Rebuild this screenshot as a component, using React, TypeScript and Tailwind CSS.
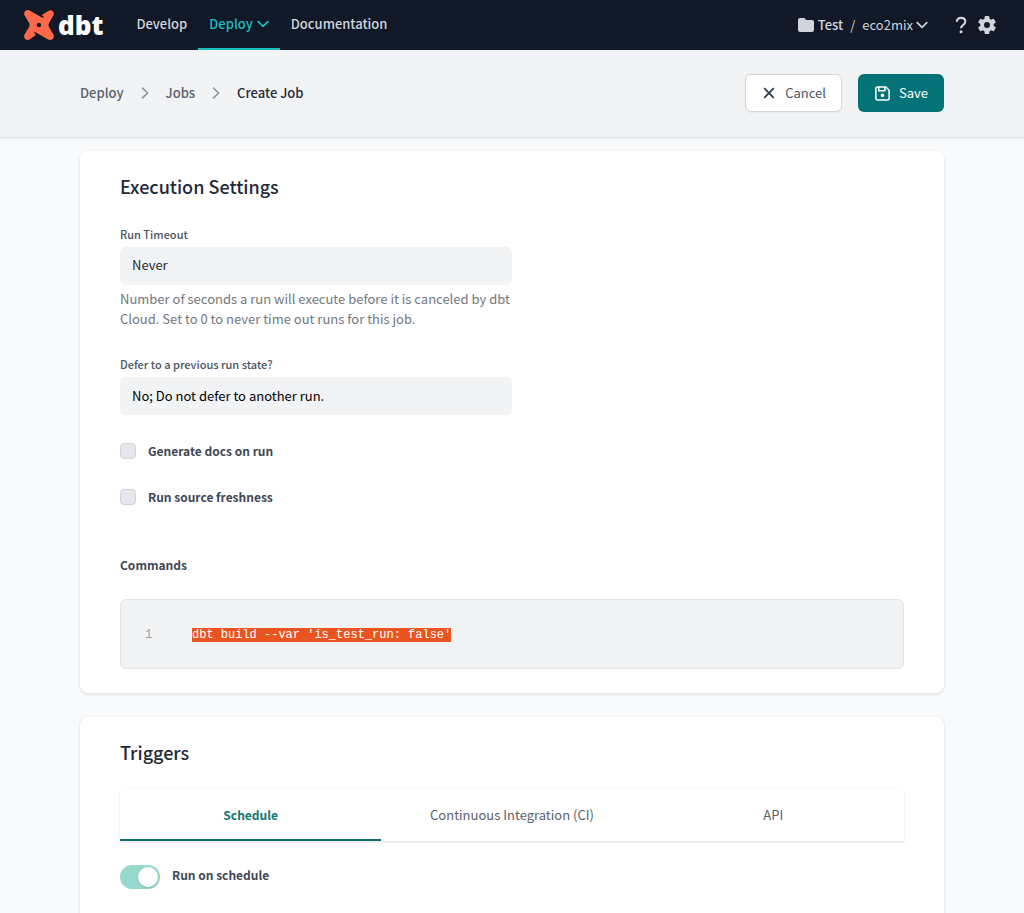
import { useState } from "react";
import type { ReactNode } from "react";

const tabs = ["Schedule", "Continuous Integration (CI)", "API"];

function ChevronDown() {
  return (
    <svg className="h-3 w-3 shrink-0" viewBox="0 0 12 12" fill="none" stroke="currentColor" strokeWidth="1.7" strokeLinecap="round" strokeLinejoin="round" aria-hidden="true">
      <path d="M1.2 3.6 6 8.4l4.800-4.800" />
    </svg>
  );
}

function ChevronRight() {
  return (
    <svg className="h-3 w-3 shrink-0 text-[#9095a0]" viewBox="0 0 12 12" fill="none" stroke="currentColor" strokeWidth="1.7" strokeLinecap="round" strokeLinejoin="round" aria-hidden="true">
      <path d="M3.600 1.200 8.600 6l-5 4.800" />
    </svg>
  );
}

function Logo() {
  return (
    <a href="#" aria-label="dbt" className="flex h-[50px] items-center gap-1">
      <svg className="h-[30px] w-[30px]" viewBox="0 0 30 30" aria-hidden="true">
        <path
          fill="#ff694a"
          fillRule="evenodd"
          d="M4.200.100 C5 .200 5.700.500 6.500 1 L16.500 6.700 C17.500 7.300 18.800 7.800 20.200 8 C19.700 7.100 18.900 6.100 17.900 5 L24.200 1 C25.500.200 27 .000 28.100.800 C29.700 1.800 30.400 3.600 29.300 5.600 L24.900 13.200 C24.400 14.200 24.400 15.800 24.900 16.800 L29.200 24.200 C30.200 25.800 30 27.600 28.700 29 C27.300 30.200 25.400 30.200 23.700 29.200 L12.800 22.900 C11.900 22.400 11 22 10 21.700 C10.400 22.800 11.100 24 12 25 L5.800 29.200 C4.200 30.200 2.400 30.100 1.100 28.900 C-.200 27.500-.200 25.700.700 24.200 L5.200 16.800 C5.700 15.800 5.700 14.200 5.200 13.200 L.700 5.600 C-.300 4 .000 2.200 1.300 1.100 C2.100.300 3.100.000 4.200.100 Z M15 12.800 A2.200 2.200 0 1 0 15 17.200 A2.200 2.200 0 1 0 15 12.800 Z"
        />
      </svg>
      <span className="font-['Open_Sans','Noto_Sans',sans-serif] text-[26px] leading-[30px] font-extrabold text-white">dbt</span>
    </a>
  );
}

function Header() {
  const link = "flex h-[50px] items-center gap-1 border-b-2 px-[11px] text-[13px] leading-5 font-medium";
  return (
    <header className="flex h-[50px] items-center justify-between bg-[#111827] pr-7 pl-6 text-[#d1d5db]">
      <div className="flex items-center gap-[22px]">
        <Logo />
        <nav className="flex">
          <a href="#develop" className={`${link} border-transparent`}>Develop</a>
          <a href="#deploy" className={`${link} border-[#1bbfc1] text-[#1bbfc1]`}>Deploy <ChevronDown /></a>
          <a href="#docs" className={`${link} border-transparent`}>Documentation</a>
        </nav>
      </div>
      <div className="flex items-center">
        <button type="button" className="flex items-center text-[13px] leading-5">
          <svg className="mr-1 h-4 w-4" viewBox="0 0 16 16" fill="currentColor" aria-hidden="true">
            <path d="M2 1h4.300l2 2H14a2 2 0 0 1 2 2v8a2 2 0 0 1-2 2H2a2 2 0 0 1-2-2V3a2 2 0 0 1 2-2Z" />
          </svg>
          <span className="font-medium">Test</span>
          <span className="mx-[7px]">/</span>
          <span className="mr-[3px]">eco2mix</span>
          <ChevronDown />
        </button>
        <button type="button" aria-label="Help" className="ml-6">
          <svg className="h-[18px] w-[18px]" viewBox="0 0 18 18" fill="none" aria-hidden="true">
            <path d="M4.800 5.800C4.800 3.300 6.400 1.900 9 1.900s4.300 1.400 4.300 3.600c0 1.800-.900 2.600-2.300 3.600C9.600 10.100 9 10.700 9 12.300" stroke="currentColor" strokeWidth="2.100" />
            <circle cx="9" cy="15.800" r="1.500" fill="currentColor" />
          </svg>
        </button>
        <button type="button" aria-label="Settings" className="ml-2">
          <svg className="h-[18px] w-[18px]" viewBox="2 2 20 20" fill="currentColor" aria-hidden="true">
            <path d="M19.430 12.980c.040-.320.070-.640.070-.980s-.030-.660-.070-.980l2.110-1.650a.5.5 0 0 0 .120-.640l-2-3.460a.5.5 0 0 0-.610-.220l-2.490 1a7.300 7.300 0 0 0-1.690-.980l-.380-2.650A.490.490 0 0 0 14 2h-4a.490.490 0 0 0-.490.420l-.380 2.650c-.610.250-1.170.590-1.690.980l-2.490-1a.490.490 0 0 0-.610.220l-2 3.460a.490.490 0 0 0 .120.640l2.110 1.650c-.040.320-.070.650-.070.980s.030.660.070.980l-2.110 1.650a.5.5 0 0 0-.120.640l2 3.460c.120.220.390.300.610.220l2.490-1c.520.400 1.080.730 1.690.980l.380 2.650c.030.240.240.420.490.420h4c.250 0 .460-.180.490-.420l.380-2.650c.610-.250 1.170-.590 1.690-.980l2.490 1c.230.090.490 0 .610-.220l2-3.460a.5.5 0 0 0-.120-.640zM12 15.300a3.300 3.300 0 1 1 0-6.600 3.300 3.300 0 0 1 0 6.600z" />
          </svg>
        </button>
      </div>
    </header>
  );
}

function PageBar() {
  return (
    <div className="flex items-center justify-between border-b border-[#e2e4e7] bg-[#f2f3f5] px-20 pt-6 pb-[25px] shadow-xs">
      <nav aria-label="Breadcrumb" className="flex items-center gap-[15px] text-[13px] leading-5 font-medium text-[#5a616d]">
        <a href="#deploy">Deploy</a>
        <ChevronRight />
        <a href="#jobs">Jobs</a>
        <ChevronRight />
        <span aria-current="page" className="text-[#1f2937]">Create Job</span>
      </nav>
      <div className="flex gap-4 text-[13px] leading-5">
        <button type="button" className="flex h-[38px] items-center gap-2 rounded-md border border-[#d1d5db] bg-white px-[15px] text-[#4b5563] shadow-xs">
          <svg className="h-4 w-4" viewBox="0 0 16 16" fill="none" stroke="#374151" strokeWidth="1.900" aria-hidden="true">
            <path d="m3.200 3.200 9.600 9.600m0-9.600-9.600 9.600" />
          </svg>
          Cancel
        </button>
        <button type="button" className="flex h-[38px] items-center gap-2 rounded-md bg-[#047377] px-4 text-white">
          <svg className="h-[17px] w-[17px]" viewBox="0 0 18 18" fill="none" stroke="currentColor" strokeWidth="1.600" aria-hidden="true">
            <path d="M3.700 2h8.600L16 5.500v8.800a1.700 1.700 0 0 1-1.700 1.700H3.700A1.700 1.700 0 0 1 2 14.300V3.700A1.700 1.700 0 0 1 3.700 2ZM5 2v4h6.500V2" strokeLinejoin="round" />
            <circle cx="9" cy="11" r="1.900" fill="currentColor" stroke="none" />
          </svg>
          Save
        </button>
      </div>
    </div>
  );
}

function Card({ title, children }: { title: string; children: ReactNode }) {
  return (
    <section className="rounded-lg bg-white px-10 py-6 shadow-[0_1px_3px_rgba(0,0,0,0.14)]">
      <h2 className="text-[18px] leading-[22px] font-medium text-[#1f2937]">{title}</h2>
      {children}
    </section>
  );
}

const strongLabel = "text-[12px] leading-5 font-bold text-[#3f4855]";

function CheckRow({ id, label }: { id: string; label: string }) {
  return (
    <div className="flex items-center gap-3">
      <input id={id} type="checkbox" className="h-4 w-4 appearance-none rounded-sm border border-[#d1d5db] bg-[#e5e7eb] checked:bg-[#047377]" />
      <label htmlFor={id} className={strongLabel}>{label}</label>
    </div>
  );
}

const fieldLabel = "block text-[11px] leading-[14px] font-medium text-[#4b5563]";
const field = "mt-[6px] block h-[38px] w-full appearance-none rounded-md bg-[#f2f3f5] px-3 text-[13px] leading-5";

export default function App() {
  const [active, setActive] = useState(0);
  return (
    <div className="min-h-screen bg-[#f9fafb] font-['Noto_Sans_CJK_SC',sans-serif]">
      <Header />
      <PageBar />
      <main className="flex flex-col gap-6 px-20 pt-[13px] pb-10">
        <Card title="Execution Settings">
          <div className="mt-[30px] w-1/2">
            <label htmlFor="timeout" className={fieldLabel}>Run Timeout</label>
            <input id="timeout" defaultValue="Never" className={`${field} pb-[3px] text-[#1f2937]`} />
            <p className="mt-1 text-[13px] leading-5 text-[#737880]">
              Number of seconds a run will execute before it is canceled by dbt Cloud. Set to 0 to never time out runs for this job.
            </p>
          </div>
          <div className="mt-7 w-1/2">
            <label htmlFor="defer" className={fieldLabel}>Defer to a previous run state?</label>
            <select id="defer" className={`${field} text-black`}>
              <option>No; Do not defer to another run.</option>
            </select>
          </div>
          <div className="mt-[26px] flex flex-col gap-[26px]">
            <CheckRow id="docs-on-run" label="Generate docs on run" />
            <CheckRow id="freshness" label="Run source freshness" />
          </div>
          <h3 className={`${strongLabel} mt-12`}>Commands</h3>
          <div className="mt-6 flex h-[70px] items-center rounded-md border border-[#e2e4e7] bg-[#f2f3f5] px-6 pt-[2px] font-['Liberation_Mono',monospace] text-[12px] leading-[14px]">
            <span className="w-[47px] text-[#9ca3af]">1</span>
            <code className="bg-[#e95420] font-['Liberation_Mono',monospace] text-white">dbt build --var 'is_test_run: false'</code>
          </div>
        </Card>
        <Card title="Triggers">
          <div role="tablist" className="mt-[26px] grid h-[52px] grid-cols-3 rounded-t-md shadow-[0_1px_3px_rgba(0,0,0,0.14)]">
            {tabs.map((tab, i) => (
              <button
                key={tab}
                type="button"
                role="tab"
                aria-selected={i === active}
                onClick={() => setActive(i)}
                className={
                  i === active
                    ? "border-b-2 border-[#0f6f6f] pt-[2px] text-[12px] leading-5 font-bold text-[#0f7673]"
                    : "border-b-2 border-transparent pt-[2px] text-[13px] leading-5 text-[#5a616d]"
                }
              >
                {tab}
              </button>
            ))}
          </div>
          <div className="mt-6 mb-10 flex items-start gap-3">
            <input
              id="run-on-schedule"
              type="checkbox"
              role="switch"
              defaultChecked
              className="flex h-6 w-10 appearance-none items-center rounded-full bg-[#d1d5db] px-[2px] before:h-5 before:w-5 before:rounded-full before:bg-white before:shadow-sm checked:justify-end checked:bg-[#97d8cf]"
            />
            <label htmlFor="run-on-schedule" className={strongLabel}>Run on schedule</label>
          </div>
        </Card>
      </main>
    </div>
  );
}
